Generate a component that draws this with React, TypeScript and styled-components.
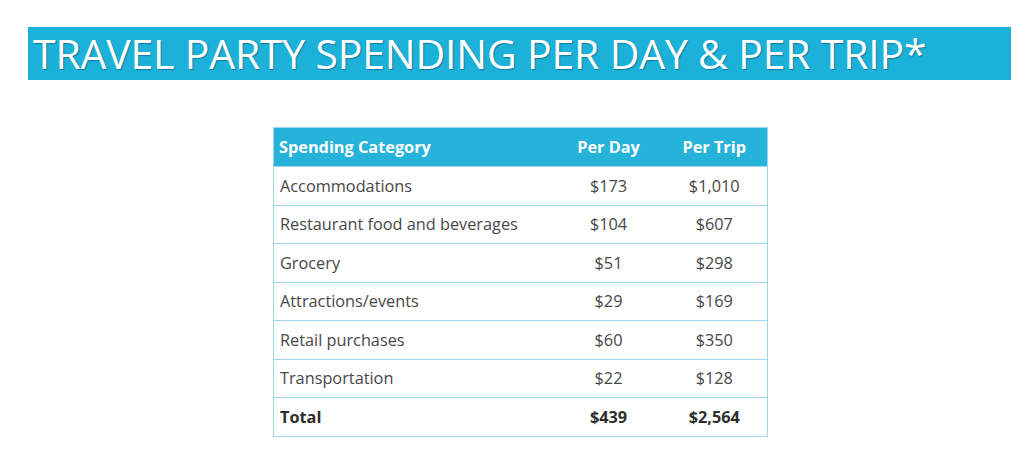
import React from 'react';
import styled, { createGlobalStyle } from 'styled-components';

const GlobalStyle = createGlobalStyle`
  html, body {
    margin: 0;
    padding: 0;
    background: #ffffff;
  }
  body {
    font-family: "Open Sans", "Liberation Sans", sans-serif;
  }
`;

type Row = {
  category: string;
  perDay: string;
  perTrip: string;
};

const rows: Row[] = [
  { category: 'Accommodations', perDay: '$173', perTrip: '$1,010' },
  { category: 'Restaurant food and beverages', perDay: '$104', perTrip: '$607' },
  { category: 'Grocery', perDay: '$51', perTrip: '$298' },
  { category: 'Attractions/events', perDay: '$29', perTrip: '$169' },
  { category: 'Retail purchases', perDay: '$60', perTrip: '$350' },
  { category: 'Transportation', perDay: '$22', perTrip: '$128' },
];

const App: React.FC = () => {
  return (
    <>
      <GlobalStyle />
      <Page>
        <Banner>
          <Title>TRAVEL PARTY SPENDING PER DAY &amp; PER TRIP*</Title>
        </Banner>
        <TableWrap>
          <Table>
            <colgroup>
              <col style={{ width: 282 }} />
              <col style={{ width: 106 }} />
              <col style={{ width: 106 }} />
            </colgroup>
            <thead>
              <tr>
                <HeadCell>Spending Category</HeadCell>
                <HeadCell $center>Per Day</HeadCell>
                <HeadCell $center>Per Trip</HeadCell>
              </tr>
            </thead>
            <tbody>
              {rows.map((r) => (
                <tr key={r.category}>
                  <Cell>{r.category}</Cell>
                  <Cell $center>{r.perDay}</Cell>
                  <Cell $center>{r.perTrip}</Cell>
                </tr>
              ))}
              <tr>
                <Cell $bold>Total</Cell>
                <Cell $center $bold>$439</Cell>
                <Cell $center $bold>$2,564</Cell>
              </tr>
            </tbody>
          </Table>
        </TableWrap>
      </Page>
    </>
  );
};

export default App;

const Page = styled.div`
  width: 1024px;
  height: 462px;
  padding-top: 27px;
  box-sizing: border-box;
  background: #ffffff;
`;

const Banner = styled.div`
  margin-left: 28px;
  width: 983px;
  height: 53px;
  background: #1cb1d8;
  display: flex;
  align-items: center;
  padding-left: 5px;
  box-sizing: border-box;
`;

const Title = styled.h1`
  margin: 0;
  font-family: "Open Sans", "Liberation Sans", sans-serif;
  font-weight: 400;
  font-size: 41px;
  line-height: 1;
  color: #ffffff;
  letter-spacing: -0.2px;
  white-space: nowrap;
  text-shadow: 1px 1px 1px rgba(0, 60, 90, 0.45);
`;

const TableWrap = styled.div`
  display: flex;
  justify-content: flex-start;
  margin-top: 47px;
  padding-left: 273px;
`;

const Table = styled.table`
  width: 494px;
  border-collapse: collapse;
  table-layout: fixed;
  border: 1.5px solid #9fd8ec;
`;

const HeadCell = styled.th<{ $center?: boolean }>`
  background: #26b3da;
  color: #ffffff;
  font-family: "Open Sans", "Liberation Sans", sans-serif;
  font-weight: 700;
  font-size: 16.3px;
  height: 39px;
  padding: 0 0 0 ${({ $center }) => ($center ? '0' : '5px')};
  text-align: ${({ $center }) => ($center ? 'center' : 'left')};
  box-sizing: border-box;
`;

const Cell = styled.td<{ $center?: boolean; $bold?: boolean }>`
  color: ${({ $bold }) => ($bold ? '#2e2e2e' : '#474747')};
  font-family: "Open Sans", "Liberation Sans", sans-serif;
  font-weight: ${({ $bold }) => ($bold ? 700 : 400)};
  font-size: 16.3px;
  height: 38.5px;
  padding: 0 0 0 ${({ $center }) => ($center ? '0' : '6px')};
  text-align: ${({ $center }) => ($center ? 'center' : 'left')};
  border-top: 1.5px solid #9fd8ec;
  box-sizing: border-box;
`;
